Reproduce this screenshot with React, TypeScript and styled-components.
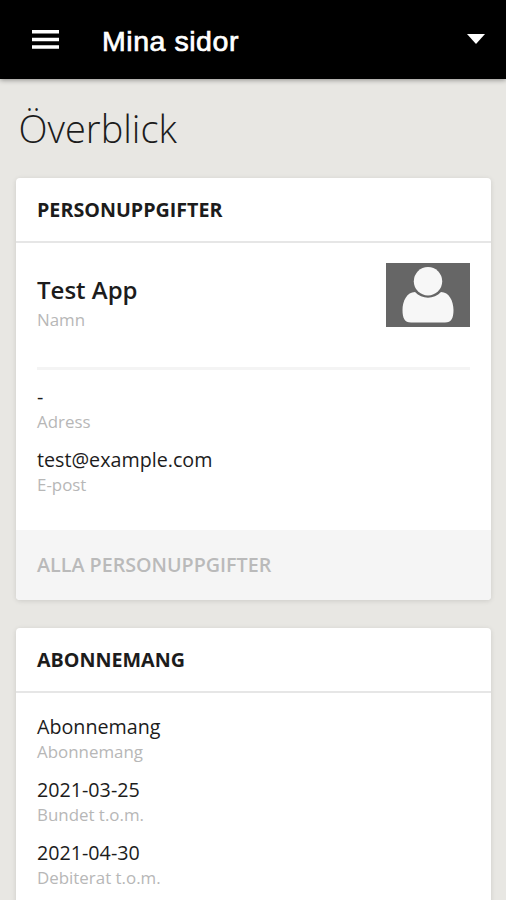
import React from "react";
import styled, { createGlobalStyle } from "styled-components";

const Global = createGlobalStyle`
  * { box-sizing: border-box; }
  html, body { margin: 0; height: 900px; overflow: hidden; background: #e8e7e3; }
  body { font-family: "Open Sans", "Noto Sans", sans-serif; color: #1c1c1c; }
`;

const TopBar = styled.header`
  display: flex;
  align-items: center;
  height: 79px;
  padding: 0 21px 0 32px;
  background: #000;
  color: #fff;
  box-shadow: 0 1px 5px rgba(0, 0, 0, 0.4);
`;

const IconButton = styled.button`
  display: flex;
  padding: 0;
  border: 0;
  background: none;
  color: inherit;
`;

const BarTitle = styled.div`
  flex: 1;
  margin-left: 43px;
  padding-top: 3px;
  font: 400 28.5px/34px "Liberation Sans", Arial, sans-serif;
  letter-spacing: 0.55px;
  -webkit-text-stroke: 0.7px #fff;
`;

const Content = styled.main`
  padding: 0 15px 0 16px;
`;

const PageTitle = styled.h1`
  margin: 0;
  padding: 21px 0 22px 2.5px;
  font-size: 38px;
  line-height: 56px;
  font-weight: 300;
`;

const Card = styled.section`
  margin-bottom: 28px;
  border-radius: 4px;
  overflow: hidden;
  background: #fff;
  box-shadow: 0 1px 5px rgba(0, 0, 0, 0.12);
`;

const CardHeader = styled.h2`
  margin: 0;
  height: 65px;
  padding: 1px 21px 0;
  border-bottom: 2px solid #e6e6e6;
  font-size: 19.7px;
  line-height: 62px;
  font-weight: 700;
`;

const Profile = styled.div`
  display: flex;
  justify-content: space-between;
  height: 127px;
  margin: 0 21px;
  padding-top: 20px;
  border-bottom: 3px solid #f4f4f4;
`;

const Avatar = styled.svg`
  width: 84px;
  height: 64px;
  background: #666;
`;

const Name = styled.div`
  padding-top: 9px;
  font-size: 24px;
  line-height: 36px;
  font-weight: 600;
`;

const Details = styled.div<{ $top: number }>`
  padding: ${(p) => p.$top}px 21px 19px;
`;

const Field = styled.div`
  height: 63.3px;
`;

const Value = styled.div`
  font-size: 19.7px;
  line-height: 26px;
`;

const Label = styled.div`
  font-size: 16.9px;
  line-height: 24px;
  color: #b7b7b7;
`;

const CardAction = styled.a`
  display: block;
  height: 70px;
  padding: 0 21px;
  background: #f5f5f5;
  color: #bababa;
  font-size: 19.7px;
  line-height: 70px;
  font-weight: 600;
`;

const subscriptions = [
  ["Abonnemang", "Abonnemang"],
  ["2021-03-25", "Bundet t.o.m."],
  ["2021-04-30", "Debiterat t.o.m."],
];

const Detail = ({ value, label }: { value: string; label: string }) => (
  <Field>
    <Value>{value}</Value>
    <Label>{label}</Label>
  </Field>
);

export default function App() {
  return (
    <>
      <Global />
      <TopBar>
        <IconButton aria-label="Meny">
          <svg width="27" height="19" viewBox="0 0 27 19" fill="currentColor">
            <path d="M0 0h27v3.5H0zM0 7.7h27v3.5H0zM0 15.3h27v3.4H0z" />
          </svg>
        </IconButton>
        <BarTitle>Mina sidor</BarTitle>
        <IconButton aria-label="Visa mer">
          <svg width="18" height="12" viewBox="0 0 18 12" fill="currentColor">
            <path d="M0 0h18L9 10z" />
          </svg>
        </IconButton>
      </TopBar>
      <Content>
        <PageTitle>Överblick</PageTitle>
        <Card>
          <CardHeader>PERSONUPPGIFTER</CardHeader>
          <Profile>
            <div>
              <Name>Test App</Name>
              <Label>Namn</Label>
            </div>
            <Avatar viewBox="0 0 84 64" fill="#f7f7f7">
              <circle cx="42" cy="18.3" r="14.2" />
              <path d="M29 29c7 7.500 19 7.500 26 0 8 0 12.500 9 12.500 18 0 8-2 12.500-8.500 12.500H25c-6.500 0-8.500-4.500-8.500-12.500 0-9 4.500-18 12.500-18z" />
            </Avatar>
          </Profile>
          <Details $top={14}>
            <Detail value="-" label="Adress" />
            <Detail value="test@example.com" label="E-post" />
          </Details>
          <CardAction>ALLA PERSONUPPGIFTER</CardAction>
        </Card>
        <Card>
          <CardHeader>ABONNEMANG</CardHeader>
          <Details $top={21}>
            {subscriptions.map(([value, label]) => (
              <Detail key={label} value={value} label={label} />
            ))}
          </Details>
        </Card>
      </Content>
    </>
  );
}
